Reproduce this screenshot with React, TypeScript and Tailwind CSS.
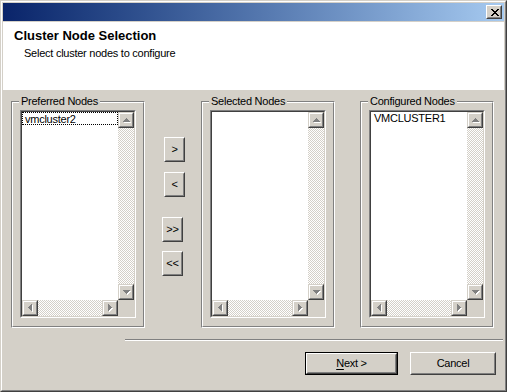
import React from "react";

type R = [number, number, number, number];

function Pix({ rects, w, h, color, shadow }: { rects: R[]; w: number; h: number; color: string; shadow?: string }) {
  return (
    <svg width={w + (shadow ? 1 : 0)} height={h + (shadow ? 1 : 0)} shapeRendering="crispEdges" className="block">
      {shadow &&
        rects.map((r, i) => <rect key={"s" + i} x={r[0] + 1} y={r[1] + 1} width={r[2]} height={r[3]} fill={shadow} />)}
      {rects.map((r, i) => (
        <rect key={i} x={r[0]} y={r[1]} width={r[2]} height={r[3]} fill={color} />
      ))}
    </svg>
  );
}

const UP: R[] = [[3, 0, 1, 1], [2, 1, 3, 1], [1, 2, 5, 1], [0, 3, 7, 1]];
const DOWN: R[] = [[0, 0, 7, 1], [1, 1, 5, 1], [2, 2, 3, 1], [3, 3, 1, 1]];
const LEFT: R[] = [[0, 3, 1, 1], [1, 2, 1, 3], [2, 1, 1, 5], [3, 0, 1, 7]];
const RIGHT: R[] = [[0, 0, 1, 7], [1, 1, 1, 5], [2, 2, 1, 3], [3, 3, 1, 1]];
const CLOSE: R[] = [
  [0, 0, 2, 1], [6, 0, 2, 1],
  [1, 1, 2, 1], [5, 1, 2, 1],
  [2, 2, 4, 1],
  [3, 3, 2, 1],
  [2, 4, 4, 1],
  [1, 5, 2, 1], [5, 5, 2, 1],
  [0, 6, 2, 1], [6, 6, 2, 1],
];

function ScrollBtn({ dir }: { dir: "up" | "down" | "left" | "right" }) {
  const rects = dir === "up" ? UP : dir === "down" ? DOWN : dir === "left" ? LEFT : RIGHT;
  const horiz = dir === "up" || dir === "down";
  return (
    <div className="w-[16px] h-[16px] shrink-0 border border-t-[#d4d0c8] border-l-[#d4d0c8] border-r-[#404040] border-b-[#404040]">
      <div className="w-full h-full border border-t-white border-l-white border-r-[#808080] border-b-[#808080] bg-[#d4d0c8] flex items-center justify-center">
        <div className={horiz ? "pl-[1px]" : "pl-[1px]"}>
          <Pix rects={rects} w={horiz ? 7 : 4} h={horiz ? 4 : 7} color="#808080" shadow="#ffffff" />
        </div>
      </div>
    </div>
  );
}

const track =
  "bg-[image:repeating-conic-gradient(#ffffff_0_25%,#d4d0c8_0_50%)] bg-[length:2px_2px]";

function ListBox({ item, focus }: { item?: string; focus?: boolean }) {
  return (
    <div className="w-[116px] h-[208px] border border-t-[#808080] border-l-[#808080] border-r-white border-b-white">
      <div className="w-full h-full border border-t-[#404040] border-l-[#404040] border-r-[#d4d0c8] border-b-[#d4d0c8] bg-white grid grid-cols-[96px_16px] grid-rows-[188px_16px]">
        <div className="overflow-hidden">
          {item && (
            <div
              className={
                "h-[13px] leading-[13px] pl-[2px] text-black " +
                (focus ? "border border-dotted border-black pl-[2px] leading-[11px]" : "pl-[3px]")
              }
            >
              {item}
            </div>
          )}
        </div>
        <div className="flex flex-col">
          <ScrollBtn dir="up" />
          <div className={"flex-1 " + track} />
          <ScrollBtn dir="down" />
        </div>
        <div className="flex">
          <ScrollBtn dir="left" />
          <div className={"flex-1 " + track} />
          <ScrollBtn dir="right" />
        </div>
        <div className="bg-[#d4d0c8]" />
      </div>
    </div>
  );
}

function Group({ title, item, focus }: { title: string; item?: string; focus?: boolean }) {
  return (
    <div className="relative w-[134px] h-[227px] shrink-0 border border-t-[#808080] border-l-[#808080] border-r-white border-b-white">
      <div className="w-full h-full border border-t-white border-l-white border-r-[#808080] border-b-[#808080] pt-[7px] pl-[7px]">
        <ListBox item={item} focus={focus} />
      </div>
      <span className="absolute left-[7px] top-[-7px] px-[2px] bg-[#d4d0c8] leading-[13px] text-black whitespace-nowrap">
        {title}
      </span>
    </div>
  );
}

function PushBtn({
  children,
  className = "",
  isDefault,
}: {
  children: React.ReactNode;
  className?: string;
  isDefault?: boolean;
}) {
  const inner = (
    <div className="w-full h-full border border-t-white border-l-white border-r-[#404040] border-b-[#404040]">
      <div className="w-full h-full border border-t-[#d4d0c8] border-l-[#d4d0c8] border-r-[#808080] border-b-[#808080] bg-[#d4d0c8] flex items-center justify-center text-black leading-[13px]">
        {children}
      </div>
    </div>
  );
  if (isDefault) {
    return <div className={"shrink-0 border border-black " + className}>{inner}</div>;
  }
  return <div className={"shrink-0 " + className}>{inner}</div>;
}

export default function App() {
  return (
    <div
      className="w-[507px] h-[392px] bg-[#d4d0c8] border border-t-[#d4d0c8] border-l-[#d4d0c8] border-r-[#404040] border-b-[#404040] text-[11px] tracking-[-0.25px]"
      style={{ fontFamily: '"Liberation Sans", Arial, sans-serif' }}
    >
      <div className="w-full h-full border border-t-white border-l-white border-r-[#808080] border-b-[#808080] p-px flex flex-col">
        {/* Title bar */}
        <div className="h-[18px] shrink-0 bg-linear-to-r from-[#0a246a] to-[#a6caf0] flex items-center justify-end pr-[2px]">
          <PushBtn className="w-[16px] h-[14px]">
            <div className="pl-[1px]">
              <Pix rects={CLOSE} w={8} h={7} color="#000000" />
            </div>
          </PushBtn>
        </div>
        {/* Header */}
        <div className="h-[68px] shrink-0 mt-px bg-white pl-[11px] pt-[6px]">
          <div className="text-[13px] font-bold leading-[15px] tracking-normal text-black">Cluster Node Selection</div>
          <div className="mt-[4px] ml-[10px] leading-[13px] text-black">Select cluster nodes to configure</div>
        </div>
        {/* Body */}
        <div className="flex pl-[8px] pt-[11px]">
          <Group title="Preferred Nodes" item="vmcluster2" focus />
          <div className="w-[23px] ml-[17px] shrink-0 flex flex-col pt-[36px]">
            <PushBtn className="ml-[2px] w-[21px] h-[25px]">&gt;</PushBtn>
            <PushBtn className="ml-[2px] mt-[10px] w-[21px] h-[25px]">&lt;</PushBtn>
            <PushBtn className="mt-[20px] w-[21px] h-[25px]">&gt;&gt;</PushBtn>
            <PushBtn className="mt-[9px] w-[21px] h-[25px]">&lt;&lt;</PushBtn>
          </div>
          <div className="ml-[16px]">
            <Group title="Selected Nodes" />
          </div>
          <div className="ml-[25px]">
            <Group title="Configured Nodes" item="VMCLUSTER1" />
          </div>
        </div>
        {/* Separator */}
        <div className="mt-[11px] ml-[122px] w-[378px] h-[2px] border-t border-t-[#808080] border-b border-b-white" />
        {/* Buttons */}
        <div className="flex mt-[11px] pl-[302px]">
          <PushBtn isDefault className="w-[93px] h-[23px]">
            <span>
              <span className="underline underline-offset-2">N</span>ext &gt;
            </span>
          </PushBtn>
          <PushBtn className="ml-[12px] w-[86px] h-[23px]">Cancel</PushBtn>
        </div>
      </div>
    </div>
  );
}
